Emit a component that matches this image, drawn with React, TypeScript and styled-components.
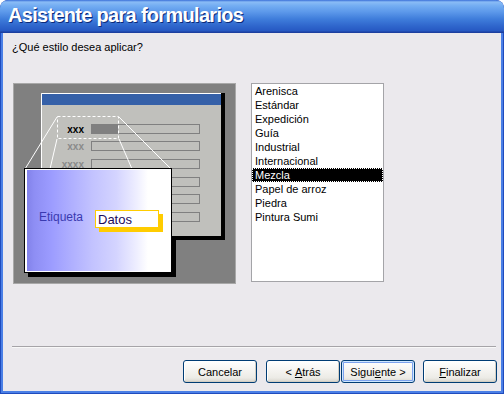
import React from "react";
import styled, { createGlobalStyle } from "styled-components";

const Global = createGlobalStyle`
  html, body { margin: 0; padding: 0; background: #fff; }
  body { font-family: "Liberation Sans", Arial, sans-serif; font-size: 11px; }
`;

const Window = styled.div`
  width: 504px;
  height: 394px;
  box-sizing: border-box;
  display: flex;
  flex-direction: column;
  background: #1f4bbd;
  padding: 0 1px 1px 1px;
  border-radius: 8px 8px 0 0;
  overflow: hidden;
`;

const TitleBar = styled.div`
  height: 33px;
  margin: 0 -1px;
  box-sizing: border-box;
  display: flex;
  align-items: center;
  padding: 0 0 2px 8px;
  border-radius: 8px 8px 0 0;
  background: linear-gradient(
    to bottom,
    #3a6fd8 0px,
    #8abcf6 2px,
    #72acf2 6px,
    #5c98ea 12px,
    #3f7ddb 19px,
    #2f66cc 26px,
    #2658c2 31px,
    #1c3fa0 32px
  );
`;

const Title = styled.div`
  color: #fff;
  font-family: "Liberation Sans", Arial, sans-serif;
  font-weight: 700;
  font-size: 20px;
  letter-spacing: -0.7px;
  text-shadow: 1px 1px 0 #0c2a7a;
`;

const Body = styled.div`
  flex: 1;
  display: flex;
  flex-direction: column;
  background: #ebe9ed;
  border: 2px solid #4a7fe6;
  border-top: 0;
  padding-top: 8px;
`;

const Question = styled.div`
  padding-left: 9px;
  line-height: 13px;
  color: #000;
`;

const ContentRow = styled.div`
  display: flex;
  gap: 15px;
  margin-top: 29px;
  padding-left: 10px;
`;

const PreviewSvg = styled.svg`
  display: block;
  flex: none;
`;

const ListBox = styled.div`
  width: 133px;
  height: 199px;
  box-sizing: border-box;
  border: 1px solid #a4a4a8;
  background: #fff;
  display: flex;
  flex-direction: column;
`;

const ListItem = styled.div<{ $selected?: boolean }>`
  height: 14px;
  line-height: 12px;
  padding-left: 2px;
  box-sizing: border-box;
  white-space: nowrap;
  color: ${(p) => (p.$selected ? "#fff" : "#000")};
  background: ${(p) => (p.$selected ? "#000" : "transparent")};
  border: 1px dotted ${(p) => (p.$selected ? "#fff" : "transparent")};
`;

const Separator = styled.div`
  margin: 62px 5px 0 9px;
  border-top: 1px solid #a6a4a8;
  border-bottom: 1px solid #f8f8f8;
`;

const ButtonRow = styled.div`
  display: flex;
  justify-content: flex-end;
  margin-top: 12px;
  padding-right: 4px;
`;

const Button = styled.div<{ $default?: boolean; $gap?: number }>`
  width: 74px;
  height: 23px;
  box-sizing: border-box;
  margin-left: ${(p) => p.$gap ?? 0}px;
  display: flex;
  align-items: center;
  justify-content: center;
  border: 1px solid #003c74;
  border-radius: 3px;
  background: linear-gradient(to bottom, #ffffff 0%, #f6f5f2 40%, #ecebe6 80%, #d8d4cc 100%);
  color: #000;
  box-shadow: ${(p) =>
    p.$default
      ? "inset 0 0 0 1px #cee7ff, inset 0 0 0 2px #7da2ee"
      : "inset -1px -1px 0 #d2cec4, inset 1px 1px 0 #fff"};
  u { text-decoration: underline; text-underline-offset: 1px; }
`;

const styles = [
  "Arenisca",
  "Estándar",
  "Expedición",
  "Guía",
  "Industrial",
  "Internacional",
  "Mezcla",
  "Papel de arroz",
  "Piedra",
  "Pintura Sumi",
];

const fieldRows = [41, 58, 76, 94, 111, 129];

const Preview = () => (
  <PreviewSvg width={223} height={201} viewBox="0 0 223 201">
    <defs>
      <linearGradient id="popGrad" x1="0" x2="1" y1="0" y2="0">
        <stop offset="0" stopColor="#8282ea" />
        <stop offset="0.05" stopColor="#8e8ef4" />
        <stop offset="0.17" stopColor="#9c9cff" />
        <stop offset="0.3" stopColor="#aeaeff" />
        <stop offset="0.45" stopColor="#c2c2ff" />
        <stop offset="0.62" stopColor="#d4d4ff" />
        <stop offset="0.76" stopColor="#eeeeff" />
        <stop offset="0.84" stopColor="#ffffff" />
        <stop offset="1" stopColor="#ffffff" />
      </linearGradient>
    </defs>
    <rect x={0.5} y={0.5} width={222} height={200} fill="#808080" stroke="#a8a8a8" />
    {/* form window */}
    <rect x={208} y={10} width={4} height={147} fill="#000" />
    <rect x={28} y={153} width={184} height={4} fill="#000" />
    <rect x={28} y={10} width={180} height={143} fill="#c0c0bc" />
    <rect x={29} y={11} width={179} height={11} fill="#3560a8" />
    <path d="M28.5 153 V10.5 H208" stroke="#fff" fill="none" />
    {fieldRows.map((y) => (
      <rect key={y} x={78.5} y={y + 0.5} width={108} height={9} fill="none" stroke="#808080" />
    ))}
    <rect x={78} y={41} width={27} height={10} fill="#808080" />
    <g fontFamily="'Liberation Sans', Arial, sans-serif" fontWeight={700} fontSize={10} textAnchor="end">
      <text x={71} y={50} fill="#000">xxx</text>
      <text x={71} y={67} fill="#8a8a8a">xxx</text>
      <text x={71} y={85} fill="#8a8a8a">xxxx</text>
    </g>
    <rect x={44.5} y={33.5} width={61} height={22} fill="none" stroke="#fff" strokeDasharray="3 2" />
    <g stroke="#fff" strokeWidth={1}>
      <line x1={44} y1={34} x2={12} y2={86} />
      <line x1={44} y1={56} x2={37} y2={86} />
      <line x1={106} y1={34} x2={158} y2={86} />
      <line x1={106} y1={56} x2={119} y2={86} />
    </g>
    {/* zoom popup */}
    <rect x={159} y={153} width={4} height={41} fill="#000" />
    <rect x={15} y={190} width={148} height={4} fill="#000" />
    <rect x={11.5} y={85.5} width={147} height={104} fill="#fff" stroke="#000" />
    <rect x={14} y={87} width={144} height={101} fill="url(#popGrad)" />
    <text x={26} y={138} fontFamily="'Liberation Sans', Arial, sans-serif" fontSize={12} fill="#3a3ab0">
      Etiqueta
    </text>
    <rect x={86} y={131} width={64} height={18} fill="#ffcc00" />
    <rect x={82.5} y={127.5} width={63} height={17} fill="#fff" stroke="#ffcc00" />
    <text x={85} y={141} fontFamily="'Liberation Sans', Arial, sans-serif" fontSize={13} fill="#1c0c5c">
      Datos
    </text>
  </PreviewSvg>
);

export default function App() {
  return (
    <>
      <Global />
      <Window>
        <TitleBar>
          <Title>Asistente para formularios</Title>
        </TitleBar>
        <Body>
          <Question>¿Qué estilo desea aplicar?</Question>
          <ContentRow>
            <Preview />
            <ListBox>
              {styles.map((s) => (
                <ListItem key={s} $selected={s === "Mezcla"}>
                  {s}
                </ListItem>
              ))}
            </ListBox>
          </ContentRow>
          <Separator />
          <ButtonRow>
            <Button>Cancelar</Button>
            <Button $gap={9}>
              &lt;&nbsp;<u>A</u>trás
            </Button>
            <Button $gap={1} $default>
              Sigui<u>e</u>nte &gt;
            </Button>
            <Button $gap={8}>
              <u>F</u>inalizar
            </Button>
          </ButtonRow>
        </Body>
      </Window>
    </>
  );
}
